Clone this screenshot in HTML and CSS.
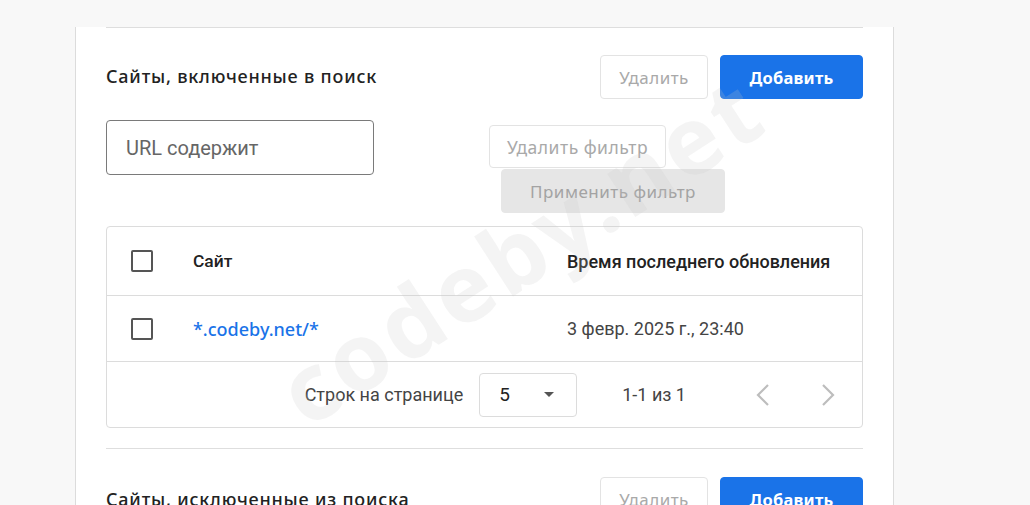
FILE: index.html
```html
<!DOCTYPE html>
<html lang="ru">
<head>
<meta charset="utf-8">
<title>Сайты</title>
<link rel="stylesheet" href="styles.css">
</head>
<body>
<div class="card">
  <div class="divider top"></div>
  <div class="section-head">
    <h2 class="heading">Сайты, включенные в поиск</h2>
    <div class="actions">
      <button class="btn btn-outline">Удалить</button>
      <button class="btn btn-primary">Добавить</button>
    </div>
  </div>
  <div class="filter-row">
    <div class="input">URL содержит</div>
    <div class="filter-buttons">
      <button class="btn btn-outline btn-filter">Удалить фильтр</button>
      <button class="btn btn-disabled btn-apply">Применить фильтр</button>
    </div>
  </div>
  <div class="table">
    <div class="row head">
      <div class="cell check"><span class="checkbox"></span></div>
      <div class="cell site">Сайт</div>
      <div class="cell time">Время последнего обновления</div>
    </div>
    <div class="row body">
      <div class="cell check"><span class="checkbox"></span></div>
      <div class="cell site"><a class="link">*.codeby.net/*</a></div>
      <div class="cell time">3 февр. 2025 г., 23:40</div>
    </div>
    <div class="pager">
      <span class="pager-label">Строк на странице</span>
      <div class="select">
        <span>5</span>
        <svg class="caret" width="10" height="5" viewBox="0 0 10 5"><path d="M0 0h10L5 5z" fill="#555"/></svg>
      </div>
      <span class="range">1-1 из 1</span>
      <div class="nav">
        <svg width="16" height="22" viewBox="0 0 16 22"><polyline points="13,1 3,11 13,21" fill="none" stroke="#bdbdbd" stroke-width="2.2"/></svg>
        <svg width="16" height="22" viewBox="0 0 16 22"><polyline points="3,1 13,11 3,21" fill="none" stroke="#bdbdbd" stroke-width="2.2"/></svg>
      </div>
    </div>
  </div>
  <div class="divider mid"></div>
  <div class="section-head second">
    <h2 class="heading">Сайты, исключенные из поиска</h2>
    <div class="actions">
      <button class="btn btn-outline">Удалить</button>
      <button class="btn btn-primary">Добавить</button>
    </div>
  </div>
</div>
<div class="watermark">codeby.net</div>
</body>
</html>
```

FILE: styles.css
```css
html, body {
  margin: 0;
  padding: 0;
  height: 100%;
  overflow: hidden;
}
body {
  background: #f8f8f8;
  font-family: Roboto, "Noto Sans", sans-serif;
  position: relative;
}
.card {
  margin-left: 75px;
  width: 757px;
  min-height: 505px;
  background: #fff;
  border-left: 1px solid #dcdcdc;
  border-right: 1px solid #dcdcdc;
  padding: 0 30px;
}
.divider {
  height: 1px;
  background: #dedede;
}
.divider.top { margin-top: 27px; }
.divider.mid { margin-top: 20px; }
.section-head {
  display: flex;
  justify-content: space-between;
  align-items: center;
  margin-top: 27px;
  height: 44px;
}
.section-head.second { margin-top: 28px; align-items: flex-start; }
.section-head.second .heading { margin-top: 10px; }
.heading {
  margin: 0 0 2px;
  font-family: "Noto Sans", sans-serif;
  font-weight: 500;
  font-size: 18px;
  letter-spacing: 0.8px;
  color: #222;
}
.actions {
  display: flex;
  gap: 12px;
}
.btn {
  font-family: "Noto Sans", sans-serif;
  font-size: 17px;
  border-radius: 4px;
  height: 44px;
  padding: 0;
  border: 1px solid #e3e3e3;
  background: #fff;
  color: #a9a9a9;
  letter-spacing: 0.5px;
}
.btn-outline { width: 108px; }
.btn-primary {
  width: 143px;
  background: #1a73e8;
  border-color: #1a73e8;
  color: #fff;
  font-weight: 700;
  font-size: 16.5px;
  letter-spacing: 0.2px;
}
.filter-row {
  display: flex;
  margin-top: 21px;
}
.input {
  height: 53px;
  border: 1px solid #7a7a7a;
  border-radius: 4px;
  display: flex;
  align-items: center;
  padding-left: 19px;
  box-sizing: content-box;
  width: 247px;
  font-size: 20px;
  color: #666;
}
.filter-buttons {
  display: flex;
  flex-direction: column;
  align-items: flex-start;
  margin-left: 115px;
  margin-top: 5px;
}
.btn-filter {
  width: 177px;
  height: 43px;
  font-size: 17.5px;
}
.btn-apply {
  width: 224px;
  height: 44px;
  margin-left: 12px;
  margin-top: 1px;
  background: #e6e6e6;
  border-color: #e6e6e6;
  color: #a3a3a3;
}
.table {
  margin-top: 13px;
  border: 1px solid #dcdcdc;
  border-radius: 4px;
}
.row {
  display: flex;
  align-items: center;
  border-bottom: 1px solid #dcdcdc;
}
.row.head { height: 68px; }
.row.body { height: 65px; }
.cell.check {
  width: 86px;
  padding-left: 24px;
  box-sizing: border-box;
  display: flex;
}
.checkbox {
  width: 18px;
  height: 18px;
  border: 2px solid #555;
  border-radius: 2px;
}
.cell.site {
  width: 374px;
  font-size: 18px;
}
.head .cell {
  color: #222;
  font-weight: 500;
  font-size: 17.4px;
}
.cell.time {
  font-size: 18px;
  color: #444;
}
.head .cell.time { color: #222; }
.link {
  font-family: "Noto Sans", sans-serif;
  color: #1a73e8;
  font-weight: 500;
  font-size: 18px;
  letter-spacing: 0;
}
.pager {
  display: flex;
  align-items: center;
  justify-content: flex-end;
  height: 65px;
  padding-right: 26px;
  font-size: 18px;
  color: #444;
}
.pager-label { margin-right: 16px; }
.select {
  height: 42px;
  border: 1px solid #dcdcdc;
  border-radius: 4px;
  display: flex;
  align-items: center;
  justify-content: space-between;
  padding: 0 22px 0 19px;
  box-sizing: content-box;
  width: 55px;
  font-size: 19px;
  color: #222;
}
.range { margin-left: 45px; margin-right: 69px; }
.nav {
  display: flex;
  gap: 49px;
}
.watermark {
  position: absolute;
  left: 190px;
  top: 185px;
  width: 660px;
  text-align: center;
  transform: rotate(-33deg);
  font-family: "Noto Sans", sans-serif;
  font-weight: 700;
  font-size: 94px;
  color: rgba(200, 200, 200, 0.2);
  pointer-events: none;
  letter-spacing: 4px;
}
```
